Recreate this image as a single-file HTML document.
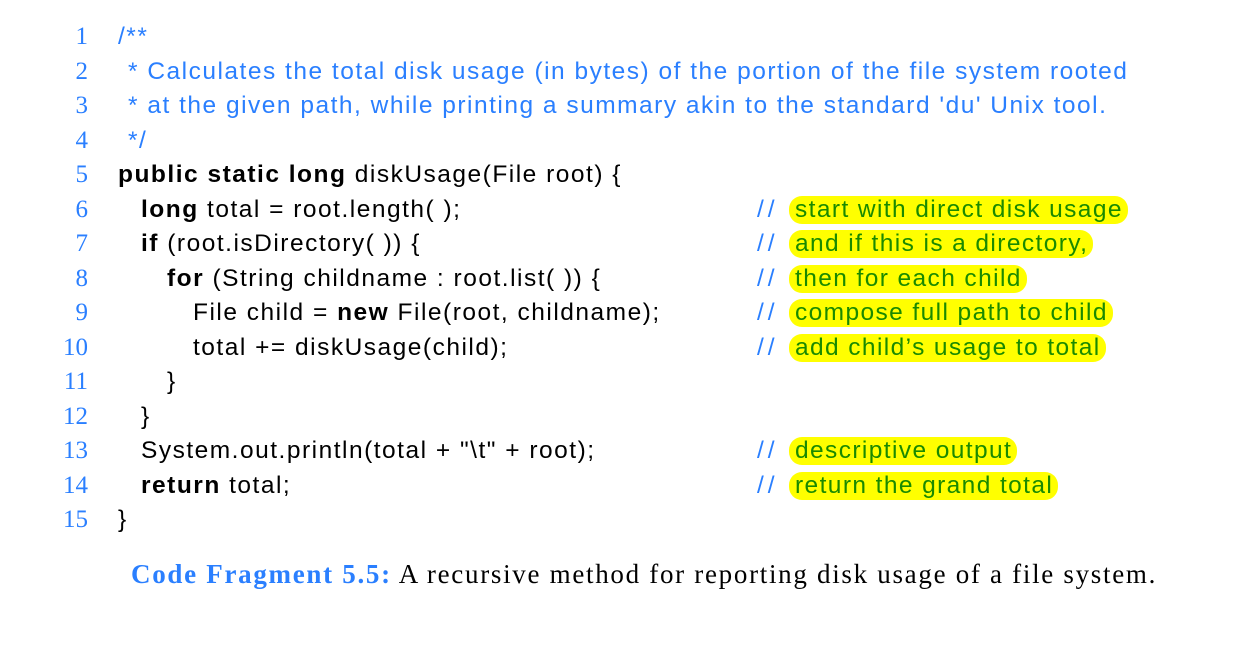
<!DOCTYPE html>
<html><head><meta charset="utf-8"><style>
body{margin:0;width:1252px;height:672px;background:#fff;position:relative;overflow:hidden;font-family:"Liberation Sans",sans-serif;}
.r{position:absolute;left:0;height:34px;width:1252px;font-size:24.5px;line-height:34px;white-space:pre;letter-spacing:1.5px;}
.n{position:absolute;right:1164px;font-family:"Liberation Serif",serif;color:#2a7fff;font-size:25px;letter-spacing:0;}
.c{position:absolute;color:#000;}
.b{font-weight:bold;}
.cm{color:#2a7fff;}
.sl{position:absolute;left:757px;color:#2a7fff;letter-spacing:4px;}
.h{position:absolute;left:789px;top:3px;height:28px;line-height:28px;background:#ffff00;color:#1a8a00;border-radius:13px;padding:0 5px 0 6px;letter-spacing:1.4px;}
.cap{position:absolute;left:131px;top:559px;font-family:"Liberation Serif",serif;font-size:27px;white-space:nowrap;letter-spacing:1.7px;}
</style></head><body>
<div class="r" style="top:20px"><span class="n">1</span><span class="c cm" style="left:118px">/**</span></div>
<div class="r" style="top:55px"><span class="n">2</span><span class="c cm" style="left:128px">* Calculates the total disk usage (in bytes) of the portion of the file system rooted</span></div>
<div class="r" style="top:89px"><span class="n">3</span><span class="c cm" style="left:128px">* at the given path, while printing a summary akin to the standard 'du' Unix tool.</span></div>
<div class="r" style="top:124px"><span class="n">4</span><span class="c cm" style="left:128px">*/</span></div>
<div class="r" style="top:158px"><span class="n">5</span><span class="c" style="left:118px"><span class="b">public static long</span> diskUsage(File root) {</span></div>
<div class="r" style="top:193px"><span class="n">6</span><span class="c" style="left:141px"><span class="b">long</span> total = root.length( );</span><span class="sl">//</span><span class="h">start with direct disk usage</span></div>
<div class="r" style="top:227px"><span class="n">7</span><span class="c" style="left:141px"><span class="b">if</span> (root.isDirectory( )) {</span><span class="sl">//</span><span class="h">and if this is a directory,</span></div>
<div class="r" style="top:262px"><span class="n">8</span><span class="c" style="left:167px"><span class="b">for</span> (String childname : root.list( )) {</span><span class="sl">//</span><span class="h">then for each child</span></div>
<div class="r" style="top:296px"><span class="n">9</span><span class="c" style="left:193px">File child = <span class="b">new</span> File(root, childname);</span><span class="sl">//</span><span class="h">compose full path to child</span></div>
<div class="r" style="top:331px"><span class="n">10</span><span class="c" style="left:193px">total += diskUsage(child);</span><span class="sl">//</span><span class="h">add child’s usage to total</span></div>
<div class="r" style="top:365px"><span class="n">11</span><span class="c" style="left:167px">}</span></div>
<div class="r" style="top:400px"><span class="n">12</span><span class="c" style="left:141px">}</span></div>
<div class="r" style="top:434px"><span class="n">13</span><span class="c" style="left:141px">System.out.println(total + "\t" + root);</span><span class="sl">//</span><span class="h">descriptive output</span></div>
<div class="r" style="top:469px"><span class="n">14</span><span class="c" style="left:141px"><span class="b">return</span> total;</span><span class="sl">//</span><span class="h">return the grand total</span></div>
<div class="r" style="top:503px"><span class="n">15</span><span class="c" style="left:118px">}</span></div>
<div class="cap"><b style="color:#2a7fff">Code Fragment 5.5:</b> A recursive method for reporting disk usage of a file system.</div>
</body></html>
